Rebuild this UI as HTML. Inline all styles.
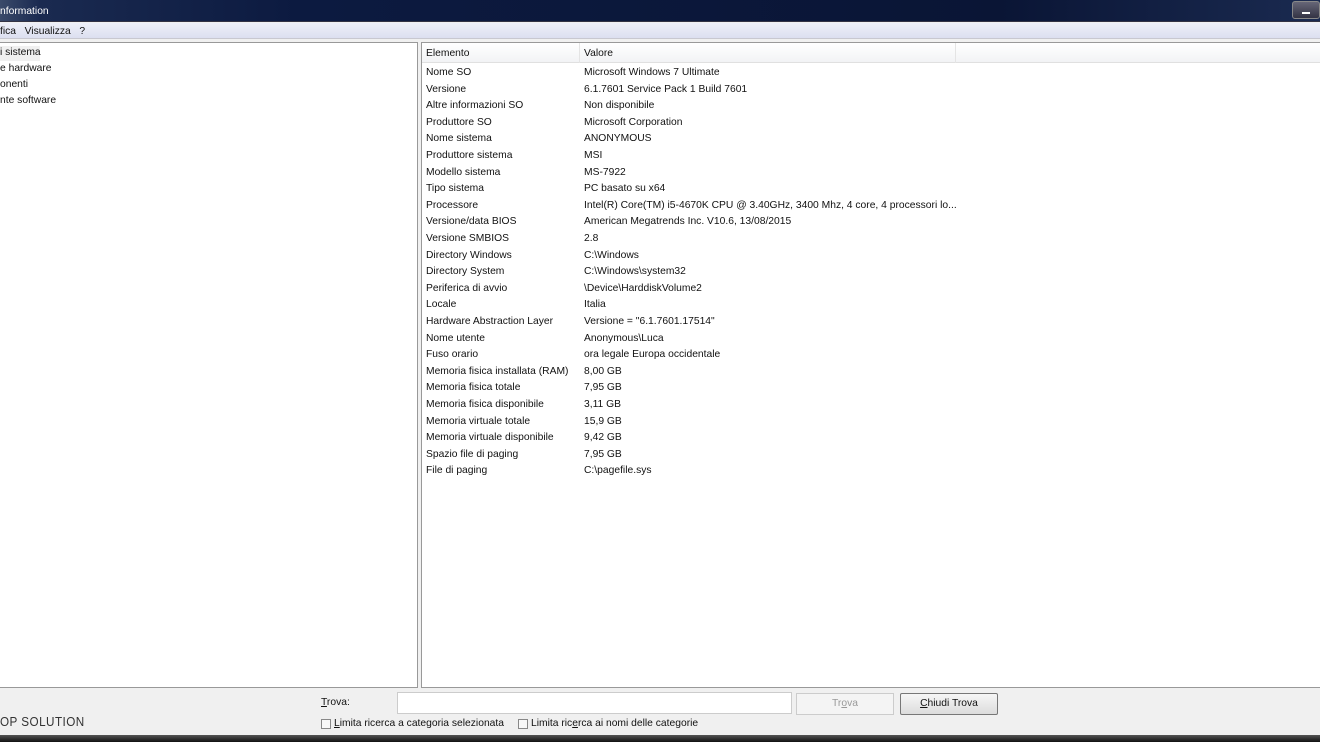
<!DOCTYPE html>
<html><head><meta charset="utf-8"><style>
*{margin:0;padding:0;box-sizing:border-box}
body{width:1320px;height:742px;overflow:hidden;background:#f0f0f0;font-family:"Liberation Sans",sans-serif;font-size:10.3px;color:#111;position:relative}
.t{position:absolute;white-space:nowrap}
#title{position:absolute;left:0;top:0;width:1320px;height:22px;background:linear-gradient(90deg,#3a4a6a 0,#1a2a50 40px,#0c1a40 300px,#0a1535 1000px,#1a2a50 1320px);border-bottom:1px solid #334}
#menu{position:absolute;left:0;top:23px;width:1320px;height:16px;background:linear-gradient(#eef0f8,#dcdff0);border-bottom:1px solid #c8c8d0}
#left{position:absolute;left:0;top:42px;width:418px;height:646px;background:#fff;border:1px solid #999;border-left:none}
#right{position:absolute;left:421px;top:42px;width:899px;height:646px;background:#fff;border:1px solid #999;border-right:none}
#hdr{position:absolute;left:0;top:0;width:899px;height:20px;background:linear-gradient(#fff,#f2f3f5);border-bottom:1px solid #e0e0e0}
.row{position:absolute;left:4px;white-space:nowrap}
.v{position:absolute;left:158px;white-space:nowrap}
</style></head><body>
<div id="title"><span class="t" style="left:0;top:6px;color:#fff">nformation</span>
<div style="position:absolute;right:0;top:1px;width:28px;height:18px;border:1px solid #888;border-radius:3px;background:linear-gradient(#667,#334)"><div style="margin:10px auto 0;width:8px;height:2px;background:#fff"></div></div></div>
<div id="menu"><span class="t" style="left:0;top:3px">fica&nbsp;&nbsp;&nbsp;Visualizza&nbsp;&nbsp;&nbsp;?</span></div>
<div id="left">
<div style="position:absolute;left:0;top:3px;width:40px;height:15px;background:#f0f0f0"></div>
<span class="t" style="left:0;top:4px">i sistema</span>
<span class="t" style="left:0;top:20px">e hardware</span>
<span class="t" style="left:0;top:36px">onenti</span>
<span class="t" style="left:0;top:52px">nte software</span>
</div>
<div id="right">
<div id="hdr"><span class="t" style="left:4px;top:5px">Elemento</span><span class="t" style="left:162px;top:5px">Valore</span>
<div style="position:absolute;left:157px;top:0;width:1px;height:20px;background:#e4e4e4"></div>
<div style="position:absolute;left:533px;top:0;width:1px;height:20px;background:#e4e4e4"></div></div>
<div class="row" style="top:24px">Nome SO<span class="v">Microsoft Windows 7 Ultimate</span></div>
<div class="row" style="top:40.6px">Versione<span class="v">6.1.7601 Service Pack 1 Build 7601</span></div>
<div class="row" style="top:57.2px">Altre informazioni SO<span class="v">Non disponibile</span></div>
<div class="row" style="top:73.8px">Produttore SO<span class="v">Microsoft Corporation</span></div>
<div class="row" style="top:90.4px">Nome sistema<span class="v">ANONYMOUS</span></div>
<div class="row" style="top:107px">Produttore sistema<span class="v">MSI</span></div>
<div class="row" style="top:123.6px">Modello sistema<span class="v">MS-7922</span></div>
<div class="row" style="top:140.2px">Tipo sistema<span class="v">PC basato su x64</span></div>
<div class="row" style="top:156.8px">Processore<span class="v">Intel(R) Core(TM) i5-4670K CPU @ 3.40GHz, 3400 Mhz, 4 core, 4 processori lo...</span></div>
<div class="row" style="top:173.4px">Versione/data BIOS<span class="v">American Megatrends Inc. V10.6, 13/08/2015</span></div>
<div class="row" style="top:190px">Versione SMBIOS<span class="v">2.8</span></div>
<div class="row" style="top:206.6px">Directory Windows<span class="v">C:\Windows</span></div>
<div class="row" style="top:223.2px">Directory System<span class="v">C:\Windows\system32</span></div>
<div class="row" style="top:239.8px">Periferica di avvio<span class="v">\Device\HarddiskVolume2</span></div>
<div class="row" style="top:256.4px">Locale<span class="v">Italia</span></div>
<div class="row" style="top:273px">Hardware Abstraction Layer<span class="v">Versione = "6.1.7601.17514"</span></div>
<div class="row" style="top:289.6px">Nome utente<span class="v">Anonymous\Luca</span></div>
<div class="row" style="top:306.2px">Fuso orario<span class="v">ora legale Europa occidentale</span></div>
<div class="row" style="top:322.8px">Memoria fisica installata (RAM)<span class="v">8,00 GB</span></div>
<div class="row" style="top:339.4px">Memoria fisica totale<span class="v">7,95 GB</span></div>
<div class="row" style="top:356px">Memoria fisica disponibile<span class="v">3,11 GB</span></div>
<div class="row" style="top:372.6px">Memoria virtuale totale<span class="v">15,9 GB</span></div>
<div class="row" style="top:389.2px">Memoria virtuale disponibile<span class="v">9,42 GB</span></div>
<div class="row" style="top:405.8px">Spazio file di paging<span class="v">7,95 GB</span></div>
<div class="row" style="top:422.4px">File di paging<span class="v">C:\pagefile.sys</span></div>
</div>
<span class="t" style="left:0;top:714px;font-size:13px;letter-spacing:0.5px;color:#333;font-family:'Liberation Sans Narrow','Liberation Sans',sans-serif;transform:scaleX(0.9);transform-origin:left">OP SOLUTION</span>
<span class="t" style="left:321px;top:697px"><u>T</u>rova:</span>
<div style="position:absolute;left:397px;top:692px;width:395px;height:22px;background:#fff;border:1px solid #ccc"></div>
<div style="position:absolute;left:796px;top:693px;width:98px;height:22px;border:1px solid #ccc;background:#f4f4f4;color:#999;text-align:center;line-height:20px">Tr<u>o</u>va</div>
<div style="position:absolute;left:900px;top:693px;width:98px;height:22px;border:1px solid #777;border-radius:2px;background:linear-gradient(#f6f6f6,#dcdcdc);text-align:center;line-height:20px"><u>C</u>hiudi Trova</div>
<div style="position:absolute;left:321px;top:719px;width:10px;height:10px;border:1px solid #888;background:#f8f8f8"></div>
<span class="t" style="left:334px;top:718px"><u>L</u>imita ricerca a categoria selezionata</span>
<div style="position:absolute;left:518px;top:719px;width:10px;height:10px;border:1px solid #888;background:#f8f8f8"></div>
<span class="t" style="left:531px;top:718px">Limita ric<u>e</u>rca ai nomi delle categorie</span>
<div style="position:absolute;left:0;top:735px;width:1320px;height:7px;background:linear-gradient(#555,#111)"></div>
</body></html>
